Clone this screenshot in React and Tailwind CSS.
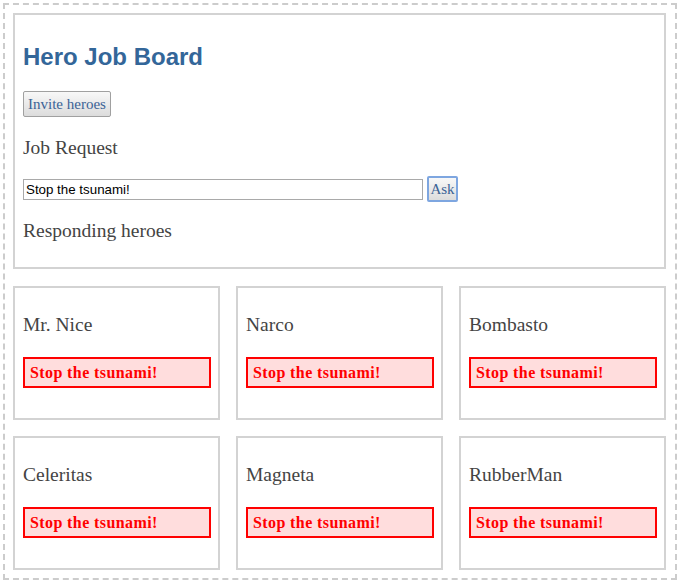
import React from "react";

const heroes = ["Mr. Nice", "Narco", "Bombasto", "Celeritas", "Magneta", "RubberMan"];
const serif = "font-['Liberation_Serif',serif]";

function HeroCard({ name }) {
  return (
    <div className="border-2 border-[#d3d3d3] pl-[8px] pr-[7px] pt-[26px] pb-[30px]">
      <div className={`${serif} text-[19.5px] leading-[22px] text-[#444]`}>{name}</div>
      <div className={`mt-[21px] h-[31px] border-2 border-[#ff0000] bg-[#ffdddd] pl-[5px] flex items-center ${serif} text-[16px] tracking-[0.4px] font-bold text-[#ff0000]`}>
        Stop the tsunami!
      </div>
    </div>
  );
}

export default function App() {
  return (
    <div className="bg-white w-[682px] h-[583px] pt-[3px] pl-[3px]">
      <div className="w-[674px] border-2 border-dashed border-[#cccccc] pl-[8px] pt-[8px] pb-[8px] pr-[9px]">
        <div className="border-2 border-[#d3d3d3] pl-[8px] pt-[28px] pb-[25px]">
          <h1 className="font-['Liberation_Sans',Arial,sans-serif] font-bold text-[24px] leading-[28px] text-[#336699]">
            Hero Job Board
          </h1>
          <button
            className={`mt-[20px] h-[26px] px-[4px] border border-[#a0a0a0] rounded-[2px] bg-gradient-to-b from-[#f8f8f8] to-[#dcdcdc] ${serif} text-[15px] leading-[20px] text-[#3b6396]`}
          >
            Invite heroes
          </button>
          <div className={`mt-[20px] ${serif} text-[19.5px] leading-[22px] text-[#444]`}>Job Request</div>
          <div className="mt-[17px] flex items-center h-[26px]">
            <input
              defaultValue="Stop the tsunami!"
              className="w-[400px] h-[21px] border border-[#a9a9a9] px-[2px] font-['Liberation_Sans',Arial,sans-serif] text-[13.33px] text-black outline-none"
            />
            <button
              className={`ml-[4px] h-[26px] w-[31px] border-2 border-[#7ea6e0] rounded-[2px] bg-gradient-to-b from-[#f8f8f8] to-[#dcdcdc] ${serif} text-[15px] text-[#3b6396]`}
            >
              Ask
            </button>
          </div>
          <div className={`mt-[18px] ${serif} text-[19.5px] leading-[22px] text-[#444]`}>Responding heroes</div>
        </div>
        <div className="mt-[17px] grid grid-cols-3 gap-x-[16px] gap-y-[16px]">
          {heroes.map((h) => (
            <HeroCard key={h} name={h} />
          ))}
        </div>
      </div>
    </div>
  );
}
